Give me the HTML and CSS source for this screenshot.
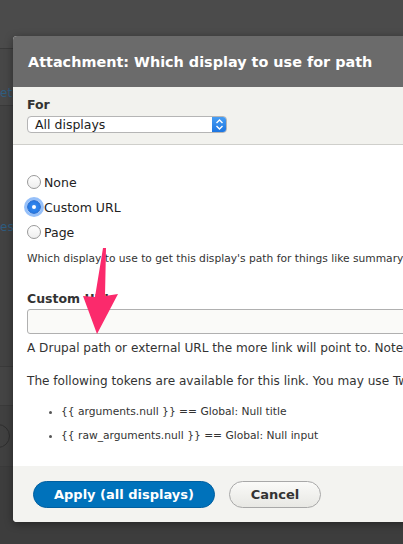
FILE: index.html
```html
<!DOCTYPE html>
<html>
<head>
<meta charset="utf-8">
<link rel="stylesheet" href="styles.css">
</head>
<body>
<div class="backdrop">
  <div class="bg-row bg-top"></div>
  <div class="bg-row bg-a"><span class="bg-link">et</span></div>
  <div class="bg-row bg-b"><span class="bg-link">es)</span></div>
  <div class="bg-row bg-c"></div>
  <div class="bg-row bg-d"><span class="bg-circle"></span></div>
  <div class="bg-row bg-e"></div>
</div>

<div class="dialog">
  <div class="dialog-title">Attachment: Which display to use for path</div>
  <div class="for-section">
    <div class="label">For</div>
    <div class="select">
      <span class="select-text">All displays</span>
      <span class="select-arrows">
        <svg width="9" height="13" viewBox="0 0 9 13"><path d="M1.5 5 L4.5 2 L7.5 5" fill="none" stroke="#fff" stroke-width="1.4"/><path d="M1.5 8 L4.5 11 L7.5 8" fill="none" stroke="#fff" stroke-width="1.4"/></svg>
      </span>
    </div>
  </div>
  <div class="body">
    <div class="radios">
      <div class="radio-row"><span class="radio"></span><span class="radio-label">None</span></div>
      <div class="radio-row"><span class="radio checked"><span class="dot"></span></span><span class="radio-label">Custom URL</span></div>
      <div class="radio-row"><span class="radio"></span><span class="radio-label">Page</span></div>
    </div>
    <div class="desc">Which display to use to get this display's path for things like summary links</div>
    <div class="label url-label">Custom URL</div>
    <div class="textfield"></div>
    <div class="desc desc2">A Drupal path or external URL the more link will point to. Note that this will override the link display setting above.</div>
    <div class="desc desc3">The following tokens are available for this link. You may use Twig syntax in this field.</div>
    <ul class="tokens">
      <li>{{ arguments.null }} == Global: Null title</li>
      <li>{{ raw_arguments.null }} == Global: Null input</li>
    </ul>
  </div>
  <div class="footer">
    <button class="btn btn-primary">Apply (all displays)</button>
    <button class="btn btn-cancel">Cancel</button>
  </div>
</div>

<svg class="arrow" width="60" height="100" viewBox="0 0 60 100">
  <path d="M42 4 L45 4 L44 52 L57 50 L36 90 L22 52 L34 53 Z" fill="#fb2a6c"/>
</svg>
</body>
</html>
```

FILE: styles.css
```css
html, body {
  margin: 0;
  padding: 0;
}
body {
  width: 403px;
  height: 544px;
  overflow: hidden;
  position: relative;
  background: #454545;
  font-family: "DejaVu Sans", "Verdana", sans-serif;
}
.backdrop {
  display: flex;
  flex-direction: column;
}
.bg-row {
  border-bottom: 1px solid #3a3a3a;
  display: flex;
  align-items: center;
}
.bg-top { height: 48px; background: #4b4b4b; }
.bg-a { height: 56px; background: #474747; }
.bg-b { height: 260px; background: #424242; }
.bg-c { height: 38px; background: #444444; }
.bg-d { height: 60px; background: #404040; }
.bg-e { height: 80px; background: #3d3d3d; }
.bg-link {
  font-size: 12px;
  color: #2f5d80;
}
.bg-a .bg-link { margin-top: 32px; }
.bg-b .bg-link { margin-top: -18px; }
.bg-circle {
  width: 22px;
  height: 22px;
  border: 1px solid #2e2e2e;
  border-radius: 50%;
  margin-left: -14px;
}

.dialog {
  position: absolute;
  left: 13px;
  top: 36px;
  width: 420px;
  border-radius: 4px;
  overflow: hidden;
  background: #fff;
  box-shadow: 0 2px 8px rgba(0,0,0,0.4);
}
.dialog-title {
  height: 51px;
  background: #6b6b6b;
  color: #fff;
  font-weight: bold;
  font-size: 14.4px;
  padding-left: 15px;
  display: flex;
  align-items: center;
  box-sizing: border-box;
  padding-top: 1px;
}
.for-section {
  background: #f2f2ee;
  border-bottom: 1px solid #cfcfcb;
  padding: 10px 14px 10px 14px;
  height: 58px;
  box-sizing: border-box;
}
.label {
  font-weight: bold;
  font-size: 12.5px;
  color: #333;
  height: 19px;
  line-height: 16px;
}
.select {
  width: 200px;
  height: 17px;
  box-sizing: border-box;
  border: 1px solid #b5b5b5;
  border-radius: 4px;
  background: #fff;
  display: flex;
  align-items: center;
  justify-content: space-between;
  overflow: hidden;
}
.select-text {
  font-size: 12.5px;
  color: #222;
  padding-left: 7px;
}
.select-arrows {
  width: 15px;
  height: 17px;
  background: linear-gradient(#4aa0f4, #1a73e0);
  display: flex;
  align-items: center;
  justify-content: center;
  margin-right: -1px;
}
.body {
  padding: 29px 14px 0 14px;
  height: 321px;
  box-sizing: border-box;
}
.radios {
  display: flex;
  flex-direction: column;
  gap: 9px;
}
.radio-row {
  display: flex;
  align-items: center;
  height: 16px;
}
.radio {
  width: 12px;
  height: 12px;
  border: 1px solid #999;
  border-radius: 50%;
  background: linear-gradient(#fff, #eee);
  margin-right: 3px;
  display: flex;
  align-items: center;
  justify-content: center;
}
.radio.checked {
  background: radial-gradient(#3b8ff0, #1b6fe0);
  border-color: #2a6fd0;
  box-shadow: 0 0 0 3px rgba(80,150,245,0.6);
}
.dot {
  width: 4px;
  height: 4px;
  background: #fff;
  border-radius: 50%;
}
.radio-label {
  font-size: 12.5px;
  color: #222;
}
.desc {
  font-size: 10.7px;
  line-height: 14px;
  color: #333;
  white-space: nowrap;
  margin-top: 12px;
}
.url-label {
  margin-top: 25px;
  height: 17px;
}
.textfield {
  height: 25px;
  width: 400px;
  box-sizing: border-box;
  border: 1px solid #b0b0b0;
  border-radius: 3px;
  background: #fafaf8;
  margin-top: 1px;
}
.desc2 {
  margin-top: 7px;
  font-size: 12.1px;
}
.desc3 {
  margin-top: 19px;
  font-size: 12.1px;
}
.tokens {
  margin: 12px 0 0 0;
  padding-left: 34px;
  font-size: 10.7px;
  color: #333;
  line-height: 24px;
  list-style: disc;
  white-space: nowrap;
}
.tokens li::marker { color: #555; font-size: 9px; }
.footer {
  background: #f3f3f0;
  height: 56px;
  display: flex;
  align-items: center;
  padding-left: 20px;
  gap: 14px;
  box-sizing: border-box;
}
.btn {
  height: 27px;
  border-radius: 14px;
  font-family: "DejaVu Sans", sans-serif;
  font-weight: bold;
  font-size: 13px;
  padding: 0;
  display: flex;
  align-items: center;
  justify-content: center;
}
.btn-primary {
  width: 182px;
  background: #0072bb;
  border: 1px solid #005fa0;
  color: #fff;
}
.btn-cancel {
  width: 92px;
  background: linear-gradient(#fafaf8, #e8e8e4);
  border: 1px solid #a8a8a8;
  color: #333;
}
.arrow {
  position: absolute;
  left: 61px;
  top: 244px;
}
```
